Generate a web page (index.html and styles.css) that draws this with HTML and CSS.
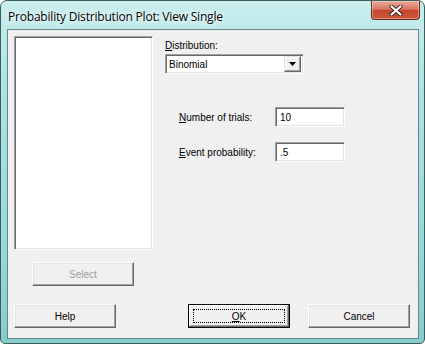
FILE: index.html
```html
<!DOCTYPE html>
<html lang="en">
<head>
    <meta charset="UTF-8">
    <title>Probability Distribution Plot: View Single</title>
    <link rel="stylesheet" href="styles.css">
</head>
<body>
    <div class="window">
        <div class="titlebar">
            <span class="title">Probability Distribution Plot: View Single</span>
            <div class="close">
                <svg width="14" height="11" viewBox="0 0 14 11">
                    <path d="M2.5 1.5 L11.5 9.5 M11.5 1.5 L2.5 9.5" stroke="#3a2420" stroke-width="4" stroke-linecap="round"/>
                    <path d="M2.5 1.5 L11.5 9.5 M11.5 1.5 L2.5 9.5" stroke="#fff" stroke-width="2.2" stroke-linecap="round"/>
                </svg>
            </div>
        </div>
        <div class="client">
            <div class="main">
                <div class="left">
                    <div class="listbox"></div>
                    <div class="btn select disabled">Select</div>
                </div>
                <div class="right">
                    <div class="dist-label"><u>D</u>istribution:</div>
                    <div class="combo">
                        <span class="combo-text">Binomial</span>
                        <span class="drop">
                            <svg width="7" height="4" viewBox="0 0 7 4"><path d="M0 0 H7 L3.5 4 Z" fill="#000"/></svg>
                        </span>
                    </div>
                    <div class="field first">
                        <span class="field-label"><u>N</u>umber of trials:</span>
                        <div class="input">10</div>
                    </div>
                    <div class="field">
                        <span class="field-label"><u>E</u>vent probability:</span>
                        <div class="input">.5</div>
                    </div>
                </div>
            </div>
            <div class="footer">
                <div class="btn">Help</div>
                <div class="btn default"><span class="focus"><u>O</u>K</span></div>
                <div class="btn">Cancel</div>
            </div>
        </div>
    </div>
</body>
</html>
```
FILE: styles.css
```css
body {
    margin: 0;
    background-color: #fff;
    font-family: "Liberation Sans", Arial, sans-serif;
    font-size: 10px;
    color: #000;
}
.window {
    width: 425px;
    height: 344px;
    box-sizing: border-box;
    border: 1px solid #3d5c5e;
    border-radius: 7px 7px 5px 5px;
    background: linear-gradient(180deg, #c9eeee 0%, #aee3e3 25%, #9ad9d9 70%, #86cccc 100%);
    display: flex;
    flex-direction: column;
}
.titlebar {
    height: 28px;
    display: flex;
    justify-content: space-between;
    align-items: flex-start;
    padding-left: 7px;
}
.title {
    font-family: "Open Sans", "Noto Sans", sans-serif;
    font-size: 12px;
    margin-top: 7px;
    color: #000;
    text-shadow: 0 0 6px #fff, 0 0 3px #fff;
    letter-spacing: -0.2px;
}
.close {
    width: 47px;
    height: 18px;
    margin-right: 4px;
    border: 1px solid #6b2a1f;
    border-top: none;
    border-radius: 0 0 4px 4px;
    background: linear-gradient(180deg, #e6a898 0%, #d97a64 45%, #c4462e 52%, #cc5836 100%);
    box-shadow: inset 0 0 0 1px rgba(255, 255, 255, 0.35);
    display: flex;
    align-items: center;
    justify-content: center;
}
.client {
    margin: 0 5px 4px 6px;
    height: 310px;
    box-sizing: border-box;
    border: 1px solid #62878a;
    background-color: #f0f0f0;
    padding: 6px 0 0 6px;
}
.main {
    display: flex;
    gap: 12px;
}
.listbox {
    width: 139px;
    height: 214px;
    box-sizing: border-box;
    background-color: #fff;
    border: 1px solid;
    border-color: #a0a0a0 #fff #fff #a0a0a0;
    box-shadow: inset 1px 1px #696969, inset -1px -1px #e3e3e3;
}
.btn {
    width: 102px;
    height: 24px;
    box-sizing: border-box;
    border: 1px solid;
    border-color: #fff #696969 #696969 #fff;
    box-shadow: inset -1px -1px #a0a0a0, inset 1px 1px #e3e3e3;
    background-color: #f0f0f0;
    display: flex;
    align-items: center;
    justify-content: center;
}
.select {
    margin: 12px 0 0 18px;
}
.disabled {
    color: #a0a0a0;
}
.dist-label {
    margin-top: 4px;
    height: 13px;
}
.combo {
    margin-top: 1px;
    width: 139px;
    height: 20px;
    box-sizing: border-box;
    background-color: #fff;
    border: 1px solid;
    border-color: #a0a0a0 #fff #fff #a0a0a0;
    box-shadow: inset 1px 1px #696969, inset -1px -1px #e3e3e3;
    display: flex;
    align-items: center;
    justify-content: space-between;
    padding: 2px 2px 2px 3px;
}
.drop {
    width: 17px;
    height: 16px;
    box-sizing: border-box;
    border: 1px solid;
    border-color: #e3e3e3 #696969 #696969 #e3e3e3;
    box-shadow: inset -1px -1px #a0a0a0, inset 1px 1px #fff;
    background-color: #f0f0f0;
    display: flex;
    align-items: center;
    justify-content: center;
}
.field {
    display: flex;
    align-items: center;
    margin-top: 15px;
    padding-left: 14px;
}
.field.first {
    margin-top: 33px;
}
.field-label {
    width: 96px;
}
.input {
    width: 70px;
    height: 20px;
    box-sizing: border-box;
    background-color: #fff;
    border: 1px solid;
    border-color: #a0a0a0 #fff #fff #a0a0a0;
    box-shadow: inset 1px 1px #696969, inset -1px -1px #e3e3e3;
    padding: 0 4px;
    display: flex;
    align-items: center;
}
.footer {
    display: flex;
    margin-top: 18px;
}
.default {
    margin-left: 72px;
    margin-right: 18px;
    border: 1px solid #000;
    box-shadow: inset -1px -1px #696969, inset 1px 1px #fff, inset -2px -2px #a0a0a0;
}
.focus {
    width: 92px;
    height: 14px;
    box-sizing: border-box;
    border: 1px dotted #000;
    display: flex;
    align-items: center;
    justify-content: center;
}
```
